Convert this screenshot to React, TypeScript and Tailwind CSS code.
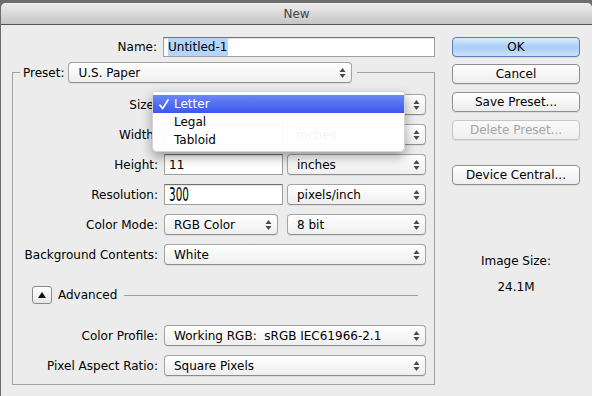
import React from 'react';

function Arrows() {
  return (
    <svg width="7" height="12" viewBox="0 0 7 12" className="shrink-0">
      <polygon points="0.5,5 3.5,1 6.5,5" fill="#4a4a4a" />
      <polygon points="0.5,7 3.5,11 6.5,7" fill="#4a4a4a" />
    </svg>
  );
}

function Select({ value, className = '' }: { value: string; className?: string }) {
  return (
    <div
      className={`h-full flex items-center justify-between pl-[9px] pr-[5px] rounded-[4px] border border-[#a3a3a3] border-b-[#8e8e8e] bg-linear-to-b from-white to-[#efefef] shadow-[0_1px_0_rgba(0,0,0,0.06)] text-[12px] text-black ${className}`}
    >
      <span className="whitespace-pre">{value}</span>
      <Arrows />
    </div>
  );
}

function Field({ children, className = '' }: { children?: React.ReactNode; className?: string }) {
  return (
    <div
      className={`h-full flex items-center pl-[4px] border border-[#a0a0a0] border-t-[#727272] bg-white shadow-[inset_0_1px_1px_rgba(0,0,0,0.12)] text-[12px] text-black ${className}`}
    >
      {children}
    </div>
  );
}

function Row({ label, children, className = '' }: { label: string; children: React.ReactNode; className?: string }) {
  return (
    <div className={`flex h-[21px] items-center ${className}`}>
      <div className="w-[145px] text-right text-[12px] text-black whitespace-nowrap">{label}</div>
      <div className="ml-[6px] flex h-full items-center">{children}</div>
    </div>
  );
}

function Button({ label, disabled, primary }: { label: string; disabled?: boolean; primary?: boolean }) {
  let look = 'border-[#8e8e8e] bg-linear-to-b from-white to-[#ededed] text-black';
  if (primary) look = 'border-[#5d7eb0] bg-linear-to-b from-[#dcedfe] via-[#a9cdf5] to-[#c7e2fd] text-black';
  if (disabled) look = 'border-[#c6c6c6] bg-linear-to-b from-[#fafafa] to-[#efefef] text-[#a4a4a4]';
  return (
    <div className={`h-[20px] flex items-center justify-center rounded-[4px] border shadow-[0_1px_0_rgba(0,0,0,0.07)] text-[12px] ${look}`}>
      {label}
    </div>
  );
}

export default function App() {
  return (
    <div className="w-[592px] h-[396px] overflow-hidden bg-[#6d6d6d] pt-[3px] pl-px font-[DejaVu_Sans,sans-serif]">
      <div className="h-full rounded-t-[5px] bg-[#ececec] flex flex-col">
        <div className="h-[22px] shrink-0 rounded-t-[5px] border-b border-[#555] bg-linear-to-b from-[#ececec] to-[#c6c6c6] flex items-center justify-center text-[12px] text-[#444]">
          New
        </div>

        <div className="flex pt-[12px]">
          {/* left: form */}
          <div className="w-[451px] shrink-0">
            <div className="flex h-[20px] items-center">
              <div className="w-[156px] text-right text-[12px] text-black">Name:</div>
              <div className="ml-[6px] h-full w-[272px]">
                <Field className="pl-[3px]">
                  <span className="bg-[#b4d5fe] pr-px">Untitled-1</span>
                </Field>
              </div>
            </div>

            <fieldset className="ml-[11px] mt-[5px] w-[423px] border border-[#a2a2a2] pb-[8px]">
              <legend className="ml-[7px] pl-[3px] pr-[5px] flex h-[21px] items-center">
                <span className="text-[12px] text-black">Preset:</span>
                <Select value="U.S. Paper" className="ml-[4px] w-[284px]" />
              </legend>

              <div className="flex flex-col pt-[11px]">
                <div className="relative">
                  <Row label="Size:">
                    <Select value="Letter" className="w-[262px]" />
                  </Row>
                  <div className="absolute left-[139px] top-[-3px] z-10 w-[253px] h-[61px] rounded-b-[5px] rounded-t-[2px] bg-white/95 border border-[#d4d4d4] shadow-[0_5px_12px_rgba(0,0,0,0.35)] pt-[3px] text-[12px]">
                    <div className="h-[18px] flex items-center bg-linear-to-b from-[#6d87f5] to-[#3b56ea] text-white">
                      <span className="w-[21px] pl-[6px] flex items-center">
                        <svg width="10" height="11" viewBox="0 0 10 11">
                          <path d="M1 6.2 L3.6 9.6 L9 1" fill="none" stroke="white" strokeWidth="1.7" strokeLinecap="round" strokeLinejoin="round" />
                        </svg>
                      </span>
                      <span>Letter</span>
                    </div>
                    <div className="h-[18px] flex items-center pl-[21px] text-black">Legal</div>
                    <div className="h-[18px] flex items-center pl-[21px] text-black">Tabloid</div>
                  </div>
                </div>

                <Row label="Width:" className="mt-[9px]">
                  <div className="h-full w-[119px]"><Field /></div>
                  <Select value="inches" className="ml-[4px] w-[139px]" />
                </Row>

                <Row label="Height:" className="mt-[9px]">
                  <div className="h-full w-[119px]"><Field>11</Field></div>
                  <Select value="inches" className="ml-[4px] w-[139px]" />
                </Row>

                <Row label="Resolution:" className="mt-[9px]">
                  <div className="h-full w-[119px]">
                    <Field>
                      <span className="inline-block origin-left scale-x-[0.55] text-[19px] leading-none">300</span>
                    </Field>
                  </div>
                  <Select value="pixels/inch" className="ml-[4px] w-[139px]" />
                </Row>

                <Row label="Color Mode:" className="mt-[9px]">
                  <Select value="RGB Color" className="w-[114px]" />
                  <Select value="8 bit" className="ml-[9px] w-[139px]" />
                </Row>

                <Row label="Background Contents:" className="mt-[9px]">
                  <Select value="White" className="w-[262px]" />
                </Row>

                <div className="mt-[21px] flex h-[18px] items-center pl-[19px] pr-[16px]">
                  <div className="w-[20px] h-[18px] flex items-center justify-center rounded-[3px] border border-[#8a8a8a] bg-linear-to-b from-white to-[#e6e6e6]">
                    <svg width="8" height="6" viewBox="0 0 8 6">
                      <polygon points="0,6 4,0 8,6" fill="#111" />
                    </svg>
                  </div>
                  <span className="ml-[6px] text-[12px] text-black">Advanced</span>
                  <div className="ml-[7px] flex-1 h-px bg-[#9e9e9e]" />
                </div>

                <Row label="Color Profile:" className="mt-[21px]">
                  <Select value="Working RGB:  sRGB IEC61966-2.1" className="w-[262px]" />
                </Row>

                <Row label="Pixel Aspect Ratio:" className="mt-[9px]">
                  <Select value="Square Pixels" className="w-[262px]" />
                </Row>
              </div>
            </fieldset>
          </div>

          {/* right: buttons */}
          <div className="w-[128px] shrink-0 flex flex-col">
            <Button label="OK" primary />
            <div className="mt-[7px]"><Button label="Cancel" /></div>
            <div className="mt-[8px]"><Button label="Save Preset..." /></div>
            <div className="mt-[8px]"><Button label="Delete Preset..." disabled /></div>
            <div className="mt-[25px]"><Button label="Device Central..." /></div>
            <div className="mt-[67px] text-center text-[12px] text-black">Image Size:</div>
            <div className="mt-[8px] text-center text-[12px] text-black">24.1M</div>
          </div>
        </div>
      </div>
    </div>
  );
}
